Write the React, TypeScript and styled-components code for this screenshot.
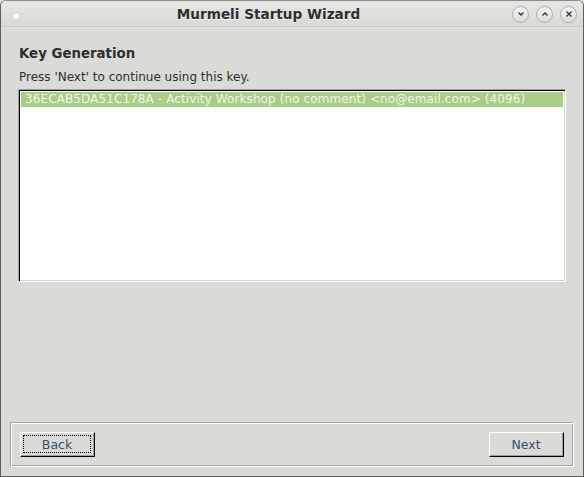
import styled, { createGlobalStyle } from "styled-components";

const GlobalStyle = createGlobalStyle`
    html, body {
        margin: 0;
        padding: 0;
        background: #dadbd6;
    }
    * {
        box-sizing: border-box;
    }
`;

const keys = [
    "36ECAB5DA51C178A - Activity Workshop (no comment) <no@email.com> (4096)",
];

function TitleButton({ kind }: { kind: "min" | "max" | "close" }) {
    return (
        <CircleButton>
            <svg width="8" height="8" viewBox="0 0 8 8">
                {kind === "min" && (
                    <path d="M1.5 2.5 L4 5 L6.5 2.5" fill="none" stroke="#3a3a3a" strokeWidth="1.4" />
                )}
                {kind === "max" && (
                    <path d="M1.5 5.5 L4 3 L6.5 5.5" fill="none" stroke="#3a3a3a" strokeWidth="1.4" />
                )}
                {kind === "close" && (
                    <path d="M1.5 1.5 L6.5 6.5 M6.5 1.5 L1.5 6.5" fill="none" stroke="#3a3a3a" strokeWidth="1.4" />
                )}
            </svg>
        </CircleButton>
    );
}

export default function App() {
    return (
        <>
            <GlobalStyle />
            <Window>
                <TitleBar>
                    <MenuDot />
                    <Title>Murmeli Startup Wizard</Title>
                    <TitleButtons>
                        <TitleButton kind="min" />
                        <TitleButton kind="max" />
                        <TitleButton kind="close" />
                    </TitleButtons>
                </TitleBar>

                <Body>
                    <Heading>Key Generation</Heading>
                    <Hint>Press 'Next' to continue using this key.</Hint>
                    <KeyList>
                        {keys.map((key, i) => (
                            <KeyRow key={key} selected={i === 0}>
                                {key}
                            </KeyRow>
                        ))}
                    </KeyList>
                </Body>

                <ButtonFrame>
                    <PushButton focused>
                        <FocusRect>Back</FocusRect>
                    </PushButton>
                    <PushButton>
                        <FocusRect>Next</FocusRect>
                    </PushButton>
                </ButtonFrame>
            </Window>
        </>
    );
}

const Window = styled.div`
    width: 584px;
    height: 477px;
    display: flex;
    flex-direction: column;
    background: #dadbd6;
    border: 1px solid #5e5f5c;
    border-top-color: #8a8b88;
    border-radius: 6px 6px 0 0;
    overflow: hidden;
    font-family: "DejaVu Sans", "Liberation Sans", sans-serif;
    color: #2e2e2e;
`;

const TitleBar = styled.div`
    height: 26px;
    flex: none;
    display: flex;
    align-items: center;
    position: relative;
    background: linear-gradient(#e6e7e3, #d9dad5);
    border-bottom: 1px solid #c8c9c4;
    box-shadow: 0 1px 0 #e4e5e1;
`;

const MenuDot = styled.div`
    position: absolute;
    left: 12px;
    top: 12px;
    width: 7px;
    height: 7px;
    border-radius: 50%;
    background: radial-gradient(circle at 40% 40%, #ffffff 40%, #c4c5c1 100%);
    box-shadow: 0 0 0 1px #d0d1cc;
`;

const Title = styled.div`
    flex: 1;
    text-align: center;
    font-weight: bold;
    font-size: 13.6px;
    color: #2e2e2e;
    padding-left: 24px;
    text-shadow: 0 1px 0 rgba(255, 255, 255, 0.6);
`;

const TitleButtons = styled.div`
    display: flex;
    gap: 7px;
    padding-right: 6px;
    padding-top: 1px;
`;

const CircleButton = styled.div`
    width: 17px;
    height: 17px;
    border-radius: 50%;
    display: flex;
    align-items: center;
    justify-content: center;
    border: 1px solid #aeafaa;
    background: linear-gradient(#f4f4f2, #dcddd8);
`;

const Body = styled.div`
    flex: 1;
    display: flex;
    flex-direction: column;
    padding: 19px 17px 0 17px;
`;

const Heading = styled.div`
    font-size: 13.33px;
    font-weight: bold;
    line-height: 16px;
    margin-left: 1px;
`;

const Hint = styled.div`
    font-size: 12px;
    line-height: 15px;
    margin: 8px 0 4px 1px;
`;

const KeyList = styled.div`
    height: 193px;
    background: #fdfdfb;
    border: 1px solid;
    border-color: #9e9f9b #ffffff #ffffff #9e9f9b;
    box-shadow: inset 1px 1px 0 #000000, inset -1px -1px 0 #d4d5d0;
    padding: 2px 2px;
`;

const KeyRow = styled.div<{ selected?: boolean }>`
    height: 15px;
    line-height: 15px;
    font-size: 12px;
    letter-spacing: 0.1px;
    padding-left: 4px;
    white-space: nowrap;
    background: ${(p) => (p.selected ? "#abcd8a" : "transparent")};
    color: ${(p) => (p.selected ? "#eef5e4" : "#2e2e2e")};
`;

const ButtonFrame = styled.div`
    flex: none;
    margin: 0 9px 9px 9px;
    height: 45px;
    display: flex;
    align-items: center;
    justify-content: space-between;
    padding: 0 9px;
    border: 1px solid;
    border-color: #a3a4a0 #ffffff #ffffff #a3a4a0;
    box-shadow: inset 1px 1px 0 #ffffff, inset -1px -1px 0 #a3a4a0;
`;

const PushButton = styled.button<{ focused?: boolean }>`
    width: 75px;
    height: 25px;
    padding: 2px 3px 3px 2px;
    background: #dadbd6;
    border: 1px solid;
    border-color: #ffffff #000000 #000000 #ffffff;
    box-shadow: inset -1px -1px 0 #9e9f9b;
    font-family: "DejaVu Sans", "Liberation Sans", sans-serif;
    font-size: 12.5px;
    color: #3c4a6a;
    display: flex;

    & > span {
        border: 1px dotted ${(p) => (p.focused ? "#000000" : "transparent")};
    }
`;

const FocusRect = styled.span`
    flex: 1;
    display: flex;
    align-items: center;
    justify-content: center;
`;
